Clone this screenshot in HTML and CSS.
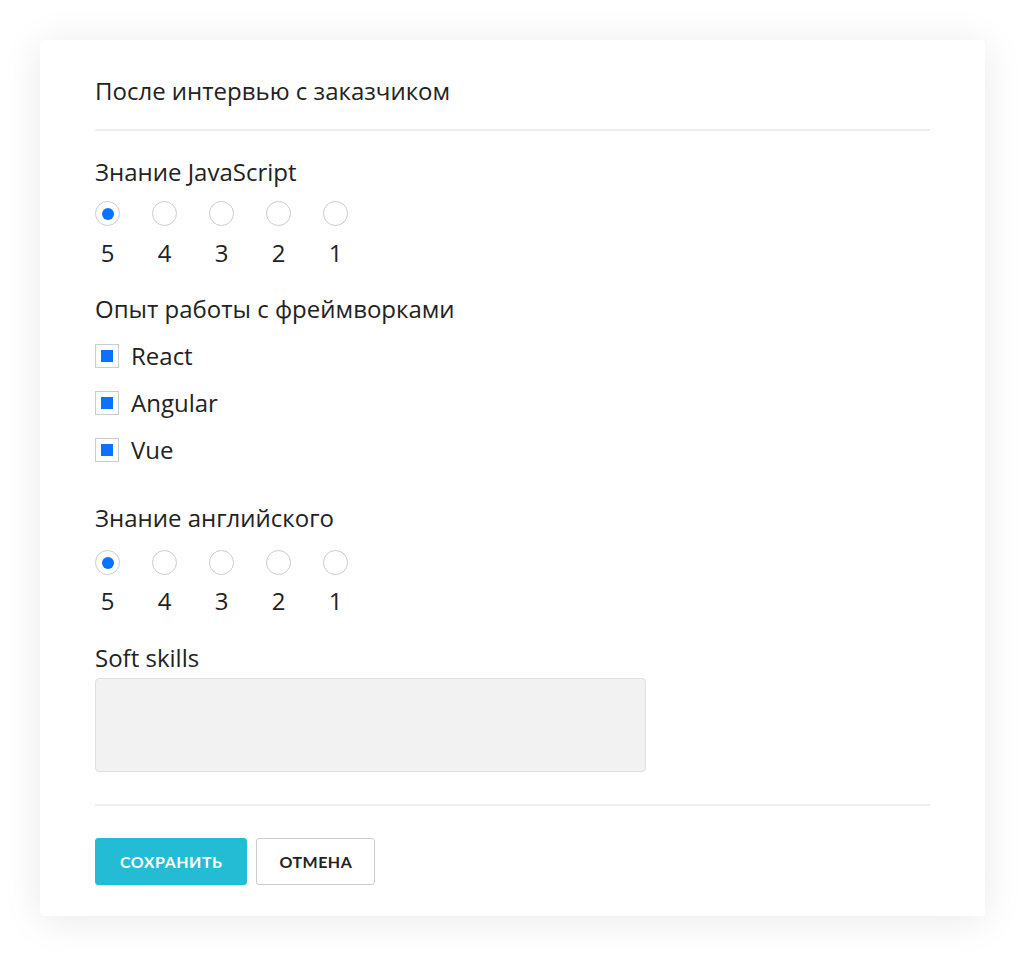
FILE: index.html
```html
<!DOCTYPE html>
<html lang="ru">
<head>
<meta charset="utf-8">
<title>После интервью с заказчиком</title>
<link rel="stylesheet" href="styles.css">
</head>
<body>
<form class="card">
  <div class="card-header">
    <h2 class="title">После интервью с заказчиком</h2>
  </div>

  <div class="field field-js">
    <div class="label">Знание JavaScript</div>
    <div class="rating">
      <label class="rate"><span class="radio checked"></span><span class="num">5</span></label>
      <label class="rate"><span class="radio"></span><span class="num">4</span></label>
      <label class="rate"><span class="radio"></span><span class="num">3</span></label>
      <label class="rate"><span class="radio"></span><span class="num">2</span></label>
      <label class="rate"><span class="radio"></span><span class="num">1</span></label>
    </div>
  </div>

  <div class="field field-fw">
    <div class="label">Опыт работы с фреймворками</div>
    <div class="checks">
      <label class="check"><span class="box checked"></span><span class="check-text">React</span></label>
      <label class="check"><span class="box checked"></span><span class="check-text">Angular</span></label>
      <label class="check"><span class="box checked"></span><span class="check-text">Vue</span></label>
    </div>
  </div>

  <div class="field field-en">
    <div class="label">Знание английского</div>
    <div class="rating">
      <label class="rate"><span class="radio checked"></span><span class="num">5</span></label>
      <label class="rate"><span class="radio"></span><span class="num">4</span></label>
      <label class="rate"><span class="radio"></span><span class="num">3</span></label>
      <label class="rate"><span class="radio"></span><span class="num">2</span></label>
      <label class="rate"><span class="radio"></span><span class="num">1</span></label>
    </div>
  </div>

  <div class="field field-soft">
    <div class="label">Soft skills</div>
    <div class="textarea"></div>
  </div>

  <div class="card-footer">
    <button type="button" class="btn btn-primary">Сохранить</button>
    <button type="button" class="btn btn-default">Отмена</button>
  </div>
</form>
</body>
</html>
```

FILE: styles.css
```css
html, body {
  margin: 0;
  padding: 0;
  background: #ffffff;
}

body {
  font-family: "Open Sans", "Liberation Sans", sans-serif;
  color: #222222;
  padding-bottom: 50px;
}

.card {
  margin: 40px 0 0 40px;
  width: 945px;
  height: 876px;
  box-sizing: border-box;
  padding: 0 55px 31px;
  background: #ffffff;
  border-radius: 4px;
  box-shadow: 0 4px 40px rgba(0, 0, 0, 0.09);
  display: flex;
  flex-direction: column;
}

.card-header {
  padding-top: 36px;
  height: 92px;
  box-sizing: border-box;
  border-bottom: 2px solid #eeeeee;
}

.title {
  margin: 0;
  font-size: 24px;
  font-weight: 400;
  line-height: 30px;
}

.label {
  font-size: 24px;
  line-height: 30px;
}

.field-js { margin-top: 26px; }
.field-fw { margin-top: 26px; }
.field-en { margin-top: 38px; }
.field-soft { margin-top: 27px; }

.rating {
  display: flex;
  gap: 32px;
  margin-top: 14px;
}

.field-en .rating { margin-top: 17px; }

.rate {
  display: flex;
  flex-direction: column;
  align-items: center;
  width: 25px;
}

.radio {
  width: 25px;
  height: 25px;
  box-sizing: border-box;
  border: 1.5px solid #cccccc;
  border-radius: 50%;
  display: flex;
  align-items: center;
  justify-content: center;
}

.radio.checked::after {
  content: "";
  width: 12px;
  height: 12px;
  border-radius: 50%;
  background: #0a72ff;
}

.num {
  margin-top: 12px;
  font-size: 24px;
  line-height: 30px;
}

.field-en .num { margin-top: 11px; }

.checks {
  margin-top: 17px;
  display: flex;
  flex-direction: column;
  gap: 17px;
}

.check {
  display: flex;
  align-items: center;
  height: 30px;
  gap: 12px;
}

.box {
  width: 24px;
  height: 24px;
  box-sizing: border-box;
  border: 1px solid #cccccc;
  display: flex;
  align-items: center;
  justify-content: center;
}

.box.checked::after {
  content: "";
  width: 12px;
  height: 12px;
  background: #0a72ff;
}

.check-text {
  font-size: 24px;
  line-height: 30px;
}

.textarea {
  margin-top: 5px;
  width: 551px;
  height: 94px;
  box-sizing: border-box;
  background: #f2f2f2;
  border: 1.5px solid #dfdfdf;
  border-radius: 4px;
}

.card-footer {
  margin-top: 32px;
  border-top: 2px solid #eeeeee;
  padding-top: 32px;
  display: flex;
  gap: 9px;
}

.btn {
  height: 47px;
  padding: 0 24px;
  font-family: "Lato", "Liberation Sans", sans-serif;
  font-weight: 700;
  font-size: 16px;
  letter-spacing: 0.5px;
  text-transform: uppercase;
  border-radius: 3px;
  cursor: pointer;
}

.btn-primary {
  background: #23bcd4;
  border: 1px solid #23bcd4;
  color: #ffffff;
}

.btn-default {
  padding: 0 22px;
  background: #ffffff;
  border: 1.5px solid #cccccc;
  color: #222222;
}
```
